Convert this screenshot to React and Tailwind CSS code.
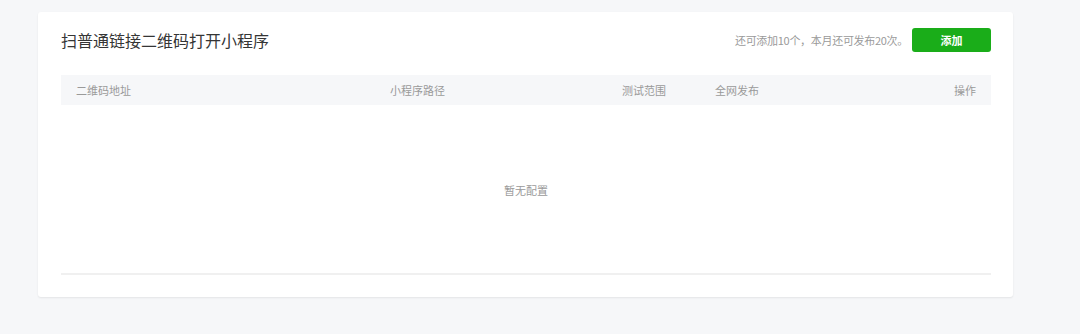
import React from 'react';

const font = { fontFamily: '"Noto Sans CJK SC", "Noto Sans", sans-serif' };

const columns = ['二维码地址', '小程序路径', '测试范围', '全网发布'];

function App() {
  return (
    <div className="min-h-screen bg-[#f6f7f9] pt-[12px] pl-[38px]" style={font}>
      <div className="w-[975px] h-[285px] bg-white rounded-[3px] shadow-[0_1px_2px_rgba(0,0,0,0.08)] pt-[16px] pl-[23px] pr-[22px] flex flex-col">
        <div className="flex items-center justify-between h-[24px]">
          <h2 className="text-[16px] text-[#353535] leading-none font-normal">扫普通链接二维码打开小程序</h2>
          <div className="flex items-center gap-[4px]">
            <span className="text-[11px] text-[#9a9a9a] tracking-[-0.3px]">还可添加10个，本月还可发布20次。</span>
            <button className="w-[79px] h-[24px] bg-[#1aad19] rounded-[3px] text-white text-[11px] font-bold">添加</button>
          </div>
        </div>
        <div className="mt-[23px] h-[30px] bg-[#f6f7f9] px-[15px] grid grid-cols-[314px_232px_93px_1fr_auto] items-center text-[11px] text-[#9a9a9a]">
          {columns.map((c) => (
            <span key={c}>{c}</span>
          ))}
          <span>操作</span>
        </div>
        <div className="h-[170px] flex items-center justify-center border-b-2 border-[#f0f0f0]">
          <span className="text-[11px] text-[#9a9a9a] mt-[2px]">暂无配置</span>
        </div>
      </div>
    </div>
  );
}

export default App;
